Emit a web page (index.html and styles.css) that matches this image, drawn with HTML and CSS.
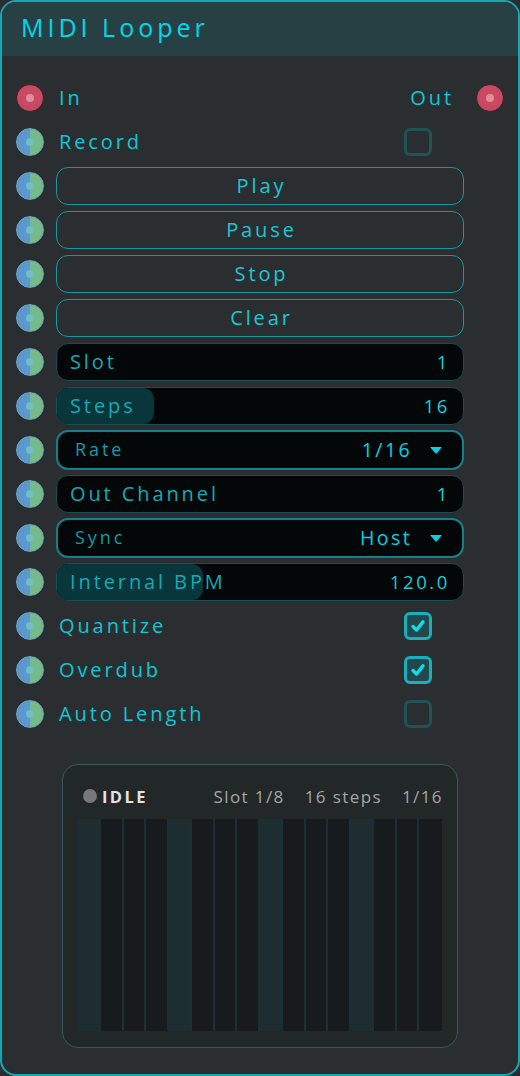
FILE: index.html
```html
<!DOCTYPE html>
<html>
<head>
<meta charset="utf-8">
<link rel="stylesheet" href="styles.css">
</head>
<body>
<div class="node">
  <div class="header"><span class="title">MIDI Looper</span></div>
  <div class="rows">
    <div class="row io">
      <span class="sock red"></span>
      <span class="lbl grow">In</span>
      <span class="lbl out">Out</span>
      <span class="sock red"></span>
    </div>
    <div class="row">
      <span class="sock bg"></span>
      <span class="lbl grow">Record</span>
      <span class="cb"></span>
    </div>
    <div class="row"><span class="sock bg"></span><div class="btn">Play</div></div>
    <div class="row"><span class="sock bg"></span><div class="btn">Pause</div></div>
    <div class="row"><span class="sock bg"></span><div class="btn">Stop</div></div>
    <div class="row"><span class="sock bg"></span><div class="btn">Clear</div></div>
    <div class="row"><span class="sock bg"></span>
      <div class="num"><span class="nl">Slot</span><span class="nv">1</span></div></div>
    <div class="row"><span class="sock bg"></span>
      <div class="num"><span class="fill" style="width:97px"></span><span class="nl">Steps</span><span class="nv">16</span></div></div>
    <div class="row"><span class="sock bg"></span>
      <div class="combo"><span class="cl">Rate</span><span class="cv">1/16</span><span class="arrow"></span></div></div>
    <div class="row"><span class="sock bg"></span>
      <div class="num"><span class="nl">Out Channel</span><span class="nv">1</span></div></div>
    <div class="row"><span class="sock bg"></span>
      <div class="combo"><span class="cl">Sync</span><span class="cv">Host</span><span class="arrow"></span></div></div>
    <div class="row"><span class="sock bg"></span>
      <div class="num"><span class="fill" style="width:146px"></span><span class="nl">Internal BPM</span><span class="nv">120.0</span></div></div>
    <div class="row"><span class="sock bg"></span><span class="lbl grow">Quantize</span><span class="cb on"><svg viewBox="0 0 16 16" width="16" height="16"><path d="M3 8.5 L6.5 12 L13 3.8" fill="none" stroke="#00e4f0" stroke-width="3.4" stroke-linecap="round" stroke-linejoin="round"/></svg></span></div>
    <div class="row"><span class="sock bg"></span><span class="lbl grow">Overdub</span><span class="cb on"><svg viewBox="0 0 16 16" width="16" height="16"><path d="M3 8.5 L6.5 12 L13 3.8" fill="none" stroke="#00e4f0" stroke-width="3.4" stroke-linecap="round" stroke-linejoin="round"/></svg></span></div>
    <div class="row"><span class="sock bg"></span><span class="lbl grow">Auto Length</span><span class="cb"></span></div>
  </div>
  <div class="panel">
    <div class="phead">
      <span class="dot"></span><span class="idle">IDLE</span>
      <span class="info">Slot 1/8</span><span class="info">16 steps</span><span class="info">1/16</span>
    </div>
    <div class="grid">
      <span class="col beat"></span><span class="col"></span><span class="col"></span><span class="col"></span>
      <span class="col beat"></span><span class="col"></span><span class="col"></span><span class="col"></span>
      <span class="col beat"></span><span class="col"></span><span class="col"></span><span class="col"></span>
      <span class="col beat"></span><span class="col"></span><span class="col"></span><span class="col"></span>
    </div>
  </div>
</div>
</body>
</html>
```

FILE: styles.css
```css
html, body { margin: 0; padding: 0; background: #2a2e30; }
body { font-family: "Open Sans", "DejaVu Sans", sans-serif; }
.node {
  width: 520px; height: 1076px; box-sizing: border-box;
  border: 2px solid #16a8b2; border-radius: 16px; overflow: hidden;
  background: #2a2e30; display: flex; flex-direction: column;
}
.header {
  height: 54px; background: #264044; display: flex; align-items: center;
  padding-left: 19px; flex-shrink: 0;
}
.title { color: #00d8ea; font-size: 25px; letter-spacing: 4px; margin-top: -4px; }
.rows { padding-top: 20px; display: flex; flex-direction: column; }
.row { height: 44px; display: flex; align-items: center; padding-left: 14px; }
.row.io { padding-right: 14px; }
.sock {
  width: 28px; height: 28px; border-radius: 50%; box-sizing: border-box; flex-shrink: 0;
  position: relative; margin-right: 12px;
}
.sock::after {
  content: ""; position: absolute; width: 8px; height: 8px; border-radius: 50%;
}
.sock.red { background: #c84a62; border: 1.5px solid #401e26; }
.sock.red::after { background: #e28c9c; left: 8.5px; top: 8.5px; }
.row.io .sock.red:last-child { margin-right: 0; }
.sock.bg { background: linear-gradient(90deg, #5b98d0 50%, #76b98a 50%); border: 1.5px solid #6aa6b8; }
.sock.bg::after { background: #6ec0c4; left: 8.5px; top: 8.5px; }
.lbl { color: #10c6d6; font-size: 20px; letter-spacing: 2.9px; padding-left: 3px; margin-top: -2px; }
.grow { flex: 1; }
.out { padding-right: 22px; }
.cb {
  width: 28px; height: 28px; box-sizing: border-box; border: 3px solid #1e5458; border-radius: 6px;
  margin-right: 86px; display: flex; align-items: center; justify-content: center;
}
.cb.on { border-color: #17b0bc; background: #23474b; }
.btn {
  width: 408px; height: 38px; box-sizing: border-box; border: 1px solid #1896a2; border-radius: 12px;
  display: flex; align-items: center; justify-content: center; color: #1cc6d4; font-size: 20px; letter-spacing: 2.9px;
  padding-left: 3px; padding-bottom: 2px;
}
.num {
  width: 408px; height: 38px; box-sizing: border-box; border: 1px solid #1a4e54; border-radius: 12px;
  background: #030708; display: flex; align-items: center; justify-content: space-between;
  padding: 0 13px 2px 13px; position: relative; overflow: hidden;
}
.fill { position: absolute; left: 0; top: 0; bottom: 0; background: #08363b; border-radius: 11px; }
.nl { color: #14aab6; position: relative; font-size: 20px; letter-spacing: 2.9px; }
.nv { color: #16cedc; position: relative; font-size: 18.5px; letter-spacing: 2.6px; }
.combo {
  width: 408px; height: 40px; box-sizing: border-box; border: 2px solid #16808a; border-radius: 12px;
  background: #030708; display: flex; align-items: center; padding: 0 20px 0 17px;
}
.cl { color: #139aa6; font-size: 18px; letter-spacing: 2.9px; flex: 1; margin-top: -2px; }
.cv { color: #00d2e2; font-size: 19.5px; letter-spacing: 2.4px; margin-right: 18px; margin-top: -2px; }
.arrow { width: 0; height: 0; border-left: 6px solid transparent; border-right: 6px solid transparent; border-top: 7px solid #00d2e2; }
.panel {
  margin: 28px 0 0 60px; width: 396px; height: 284px; box-sizing: border-box;
  border: 1.5px solid #355a58; border-radius: 16px; background: #222728;
  padding: 0 15px 0 15px; display: flex; flex-direction: column;
}
.phead { height: 54px; display: flex; align-items: center; padding-left: 5px; padding-top: 8px; box-sizing: border-box; }
.dot { width: 14px; height: 14px; border-radius: 50%; background: #787878; margin-right: 5px; }
.idle { color: #e2e2e2; font-weight: bold; font-size: 16.5px; letter-spacing: 2.4px; flex: 1; }
.info { color: #a6a6a6; font-size: 17px; letter-spacing: 1.4px; margin-left: 20px; }
.info:last-child { margin-right: -1px; }
.grid { height: 212px; display: grid; grid-template-columns: repeat(16, 1fr); background: #1b3034; }
.col { background: #171b1d; border-right: 2px solid #1b3034; }
.col.beat { background: #1e2d31; }
.col:last-child { border-right: 0; }
```
